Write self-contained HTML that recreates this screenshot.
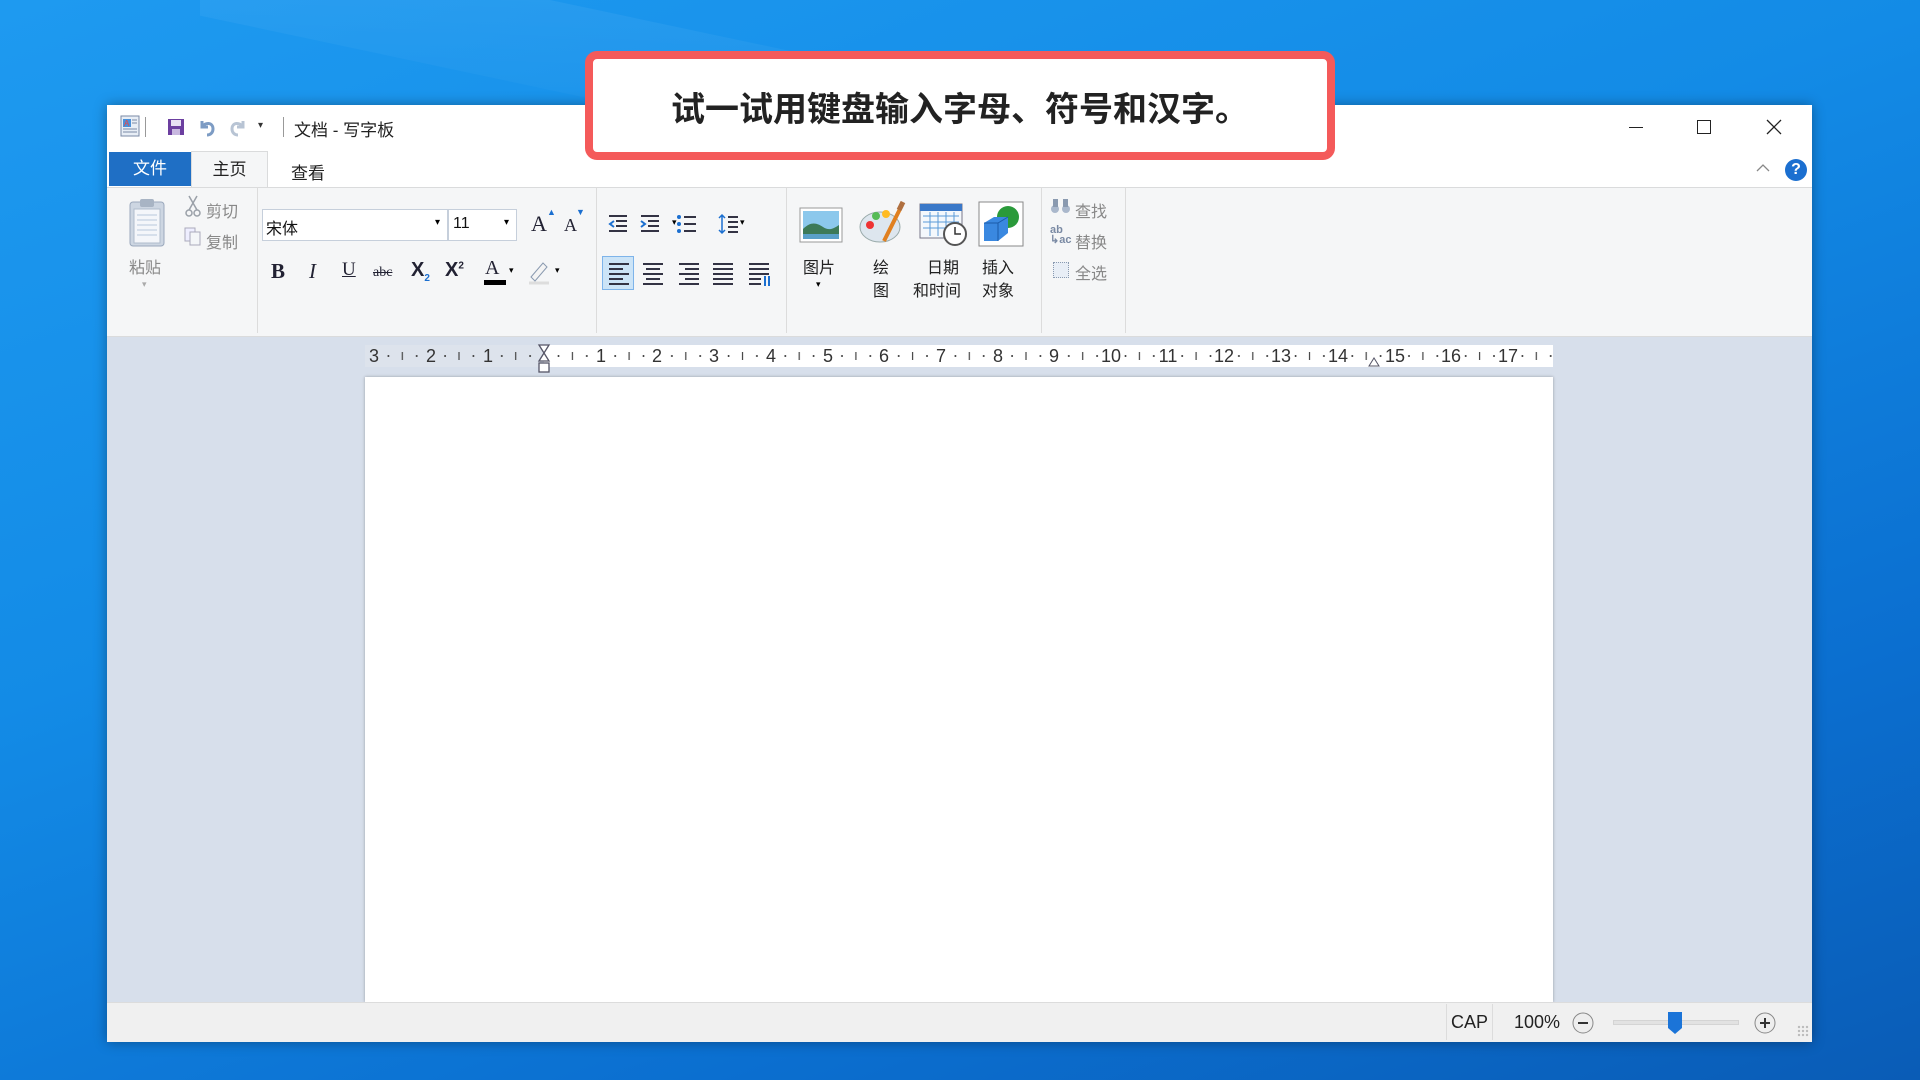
<!DOCTYPE html>
<html><head><meta charset="utf-8"><style>
*{margin:0;padding:0;box-sizing:border-box}
body{width:1920px;height:1080px;overflow:hidden;position:relative;font-family:"Liberation Sans","Noto Sans CJK SC",sans-serif;background:linear-gradient(160deg,#1e9af0 0%,#138be6 40%,#0b6fd0 75%,#0a5cb6 100%);}
.a{position:absolute}
.win{left:107px;top:105px;width:1705px;height:937px;background:#fff;box-shadow:0 0 12px rgba(0,0,0,.35)}
.t{font-size:17px;color:#222;white-space:nowrap}
.s{font-size:16px;color:#333;white-space:nowrap}
.g{color:#888}
.lbl{font-size:16px;color:#444;top:217px}
.sep{width:1px;background:#dcdcdc;top:88px;height:140px}
.num{position:absolute;top:1px;font-size:18px;color:#333;transform:translateX(-50%);padding:0 2px}
</style></head><body>
<div class="a" style="left:200px;top:0;width:700px;height:90px;background:linear-gradient(170deg,rgba(255,255,255,.08),rgba(255,255,255,0));transform:skewY(12deg)"></div>
<div class="a win">
 <svg class="a" style="left:13px;top:10px" width="20" height="22"><rect x="1" y="1" width="18" height="20" fill="#e8eef6" stroke="#7a8aa6"/><rect x="3" y="4" width="8" height="8" fill="#4a90d9"/><text x="4" y="11" font-size="8" fill="#e44" font-family="Liberation Sans">A</text><path d="M12 5h5M12 8h5M3 14h14M3 17h14" stroke="#7a8aa6"/></svg>
 <div class="a" style="left:38px;top:12px;width:1px;height:20px;background:#999"></div>
 <svg class="a" style="left:60px;top:13px" width="18" height="18"><rect x="1" y="1" width="16" height="16" fill="#6c3fa0"/><rect x="4" y="2" width="10" height="6" fill="#e8e0f4"/><rect x="5" y="11" width="8" height="6" fill="#c8b8e0"/></svg>
 <svg class="a" style="left:90px;top:12px" width="20" height="20"><path d="M5 4v6h6M5 10c3-5 11-5 11 2c0 4-3 6-6 6" stroke="#7d9cc4" stroke-width="3" fill="none"/></svg>
 <svg class="a" style="left:121px;top:12px" width="20" height="20"><path d="M15 4v6H9M15 10c-3-5-11-5-11 2c0 4 3 6 6 6" stroke="#b8c4d4" stroke-width="3" fill="none"/></svg>
 <div class="a" style="left:151px;top:15px;font-size:10px;color:#333">▾</div>
 <div class="a" style="left:176px;top:12px;width:1px;height:20px;background:#999"></div>
 <div class="a t" style="left:187px;top:11px">文档 - 写字板</div>
 <div class="a" style="left:1522px;top:22px;width:14px;height:1px;background:#222"></div>
 <div class="a" style="left:1590px;top:15px;width:14px;height:14px;border:1px solid #222"></div>
 <svg class="a" style="left:1659px;top:14px" width="16" height="16"><path d="M1 1L15 15M15 1L1 15" stroke="#222" stroke-width="1.3"/></svg>
 <div class="a" style="left:2px;top:47px;width:82px;height:34px;background:#1f6fc5;color:#fff;font-size:17px;text-align:center;line-height:34px">文件</div>
 <div class="a" style="left:84px;top:46px;width:77px;height:37px;border:1px solid #dadbdc;border-bottom:none;background:#f5f6f7;font-size:17px;text-align:center;line-height:36px;color:#222">主页</div>
 <div class="a t" style="left:184px;top:54px">查看</div>
 <svg class="a" style="left:1649px;top:58px" width="14" height="10"><path d="M1 8l6-6l6 6" stroke="#888" fill="none" stroke-width="1.3"/></svg>
 <div class="a" style="left:1678px;top:54px;width:22px;height:22px;border-radius:50%;background:#1b6fd0;color:#fff;font-size:16px;font-weight:bold;text-align:center;line-height:22px">?</div>
 <div class="a" style="left:0;top:82px;width:1705px;height:150px;background:#f5f6f7;border-top:1px solid #dadbdc;border-bottom:1px solid #dadbdc"></div>
 <div class="a" style="left:0;top:82px;width:1705px;height:150px">
  <svg class="a" style="left:20px;top:10px" width="40" height="50"><rect x="3" y="5" width="34" height="44" rx="3" fill="#cdd6e2" stroke="#9aa8bc"/><rect x="7" y="12" width="26" height="34" fill="#f4f6fa" stroke="#b0bccc"/><rect x="13" y="2" width="14" height="8" rx="2" fill="#a8b4c4"/><path d="M10 18h20M10 23h20M10 28h20M10 33h20M10 38h20" stroke="#b8c8dc"/></svg>
  <div class="a s g" style="left:22px;top:67px">粘贴</div>
  <div class="a" style="left:35px;top:92px;font-size:9px;color:#aaa">▾</div>
  <svg class="a" style="left:78px;top:8px" width="16" height="22"><path d="M4 1l8 14M12 1L4 15" stroke="#9aa0a8" stroke-width="1.5"/><circle cx="4" cy="18" r="3" fill="none" stroke="#9aa0a8" stroke-width="1.5"/><circle cx="12" cy="18" r="3" fill="none" stroke="#9aa0a8" stroke-width="1.5"/></svg>
  <div class="a s g" style="left:99px;top:11px">剪切</div>
  <svg class="a" style="left:77px;top:40px" width="18" height="20"><rect x="1" y="1" width="10" height="13" fill="#eef" stroke="#aab"/><rect x="6" y="5" width="10" height="13" fill="#f4f6f8" stroke="#aab"/></svg>
  <div class="a s g" style="left:99px;top:42px">复制</div>
  <div class="a lbl" style="left:47px;transform:translateX(-50%)">剪贴板</div>
  <div class="a sep" style="left:150px;top:0;height:146px"></div>
  <div class="a" style="left:155px;top:22px;width:186px;height:32px;background:#fff;border:1px solid #c6cfdb"></div>
  <div class="a s" style="left:159px;top:28px;color:#111">宋体</div>
  <div class="a" style="left:328px;top:30px;font-size:10px">▾</div>
  <div class="a" style="left:341px;top:22px;width:69px;height:32px;background:#fff;border:1px solid #c6cfdb"></div>
  <div class="a s" style="left:346px;top:28px;color:#111">11</div>
  <div class="a" style="left:397px;top:30px;font-size:10px">▾</div>
  <div class="a" style="left:424px;top:24px;font-family:'Liberation Serif',serif;font-size:22px;color:#223">A</div><div class="a" style="left:440px;top:20px;font-size:9px;color:#1b6fd0">▲</div>
  <div class="a" style="left:457px;top:28px;font-family:'Liberation Serif',serif;font-size:18px;color:#223">A</div><div class="a" style="left:469px;top:20px;font-size:9px;color:#1b6fd0">▼</div>
  <div class="a" style="left:164px;top:72px;font-family:'Liberation Serif',serif;font-weight:bold;font-size:21px;color:#223">B</div>
  <div class="a" style="left:202px;top:72px;font-family:'Liberation Serif',serif;font-style:italic;font-size:21px;color:#223">I</div>
  <div class="a" style="left:235px;top:72px;font-family:'Liberation Serif',serif;text-decoration:underline;font-size:19px;color:#223">U</div>
  <div class="a" style="left:266px;top:78px;font-family:'Liberation Serif',serif;font-size:14px;color:#223;text-decoration:line-through">abc</div>
  <div class="a" style="left:304px;top:72px;font-weight:bold;font-size:20px;color:#223">X<sub style="font-size:10px;color:#1b6fd0">2</sub></div>
  <div class="a" style="left:338px;top:72px;font-weight:bold;font-size:20px;color:#223">X<sup style="font-size:10px">2</sup></div>
  <div class="a" style="left:378px;top:70px;font-family:'Liberation Serif',serif;font-size:20px;color:#223">A</div><div class="a" style="left:377px;top:93px;width:22px;height:5px;background:#000"></div><div class="a" style="left:402px;top:78px;font-size:9px">▾</div>
  <svg class="a" style="left:420px;top:70px" width="24" height="28"><path d="M4 20l12-14l4 4l-12 14z" fill="#f4f4f4" stroke="#8a9ab0"/><path d="M2 26h20" stroke="#ddd" stroke-width="3"/></svg><div class="a" style="left:448px;top:78px;font-size:9px">▾</div>
  <div class="a lbl" style="left:317px;transform:translateX(-50%)">字体</div>
  <div class="a sep" style="left:489px;top:0;height:146px"></div>
  <svg class="a" style="left:500px;top:26px" width="140" height="28" fill="none" stroke-width="2">
   <path d="M2 3h18M9 8h11M9 13h11M2 18h18" stroke="#334"/><path d="M7 8l-4 3l4 3" stroke="#1b6fd0"/>
   <path d="M34 3h18M41 8h11M41 13h11M34 18h18" stroke="#334"/><path d="M34 8l4 3l-4 3" stroke="#1b6fd0"/>
   <circle cx="72" cy="4" r="2" fill="#1b6fd0" stroke="none"/><circle cx="72" cy="11" r="2" fill="#1b6fd0" stroke="none"/><circle cx="72" cy="18" r="2" fill="#1b6fd0" stroke="none"/><path d="M77 4h12M77 11h12M77 18h12" stroke="#334"/>
   <path d="M115 2v18M112 5l3-3l3 3M112 17l3 3l3-3" stroke="#1b6fd0" stroke-width="1.5"/><path d="M121 4h10M121 9h10M121 14h10M121 19h10" stroke="#334"/>
  </svg>
  <div class="a" style="left:565px;top:30px;font-size:9px">▾</div><div class="a" style="left:633px;top:30px;font-size:9px">▾</div>
  <div class="a" style="left:495px;top:69px;width:32px;height:34px;background:#cce4f7;border:1px solid #7eb4ea"></div>
  <svg class="a" style="left:500px;top:75px" width="170" height="24" stroke="#334" stroke-width="2">
   <path d="M2 2h20M2 7h14M2 12h20M2 17h14M2 22h20"/>
   <path d="M36 2h20M39 7h14M36 12h20M39 17h14M36 22h20"/>
   <path d="M72 2h20M78 7h14M72 12h20M78 17h14M72 22h20"/>
   <path d="M106 2h20M106 7h20M106 12h20M106 17h20M106 22h20"/>
   <path d="M142 2h20M142 7h20M142 12h20M142 17h12M142 22h12"/><path d="M158 14v10M162 14v10" stroke="#1b6fd0"/>
  </svg>
  <div class="a lbl" style="left:581px;transform:translateX(-50%)">段落</div>
  <div class="a sep" style="left:679px;top:0;height:146px"></div>
  <svg class="a" style="left:692px;top:20px" width="44" height="36"><rect x="1" y="1" width="42" height="34" fill="#fff" stroke="#999"/><rect x="4" y="4" width="36" height="28" fill="#8cc8ec"/><path d="M4 22c8-8 14-6 20-2c6 4 10 2 16-2v14H4z" fill="#3d7a58"/><rect x="4" y="27" width="36" height="5" fill="#5aa0c8"/></svg>
  <div class="a s" style="left:696px;top:67px;color:#222">图片</div>
  <div class="a" style="left:709px;top:92px;font-size:9px">▾</div>
  <svg class="a" style="left:751px;top:14px" width="48" height="44"><ellipse cx="22" cy="26" rx="20" ry="15" fill="#dde6ee" stroke="#9aa"/><circle cx="12" cy="24" r="4" fill="#e33"/><circle cx="18" cy="15" r="4" fill="#5b5"/><circle cx="28" cy="13" r="4" fill="#fb2"/><path d="M26 40L44 4" stroke="#e08020" stroke-width="4"/><path d="M41 9l4-8" stroke="#b07040" stroke-width="5"/></svg>
  <div class="a s" style="left:766px;top:67px;color:#222">绘</div><div class="a s" style="left:766px;top:90px;color:#222">图</div>
  <svg class="a" style="left:812px;top:15px" width="50" height="44"><rect x="1" y="2" width="42" height="34" fill="#f4f8fc" stroke="#778"/><rect x="1" y="2" width="42" height="7" fill="#3a78c8"/><path d="M4 14h36M4 20h36M4 26h36M11 10v24M19 10v24M27 10v24M35 10v24" stroke="#5a9ad8"/><circle cx="36" cy="32" r="11" fill="#fff" stroke="#555" stroke-width="2"/><path d="M36 25v7h6" stroke="#333" stroke-width="1.5" fill="none"/></svg>
  <div class="a s" style="left:820px;top:67px;color:#222">日期</div><div class="a s" style="left:806px;top:90px;color:#222">和时间</div>
  <svg class="a" style="left:871px;top:14px" width="46" height="46"><rect x="1" y="1" width="44" height="44" fill="#fff" stroke="#888"/><circle cx="30" cy="16" r="11" fill="#2a9a3a"/><path d="M6 22l10-6h14v16l-10 8H6z" fill="#3a88e0"/><path d="M6 22h14v18M20 22l10-6" stroke="#1a5aa8" fill="none"/></svg>
  <div class="a s" style="left:875px;top:67px;color:#222">插入</div><div class="a s" style="left:875px;top:90px;color:#222">对象</div>
  <div class="a lbl" style="left:804px;transform:translateX(-50%)">插入</div>
  <div class="a sep" style="left:934px;top:0;height:146px"></div>
  <svg class="a" style="left:943px;top:10px" width="22" height="18"><circle cx="5" cy="12" r="4" fill="#aab8cc"/><circle cx="16" cy="12" r="4" fill="#aab8cc"/><rect x="3" y="2" width="5" height="8" fill="#8a9ab0"/><rect x="13" y="2" width="5" height="8" fill="#8a9ab0"/></svg>
  <div class="a s g" style="left:968px;top:11px">查找</div>
  <div class="a" style="left:943px;top:38px;font-size:11px;font-weight:bold;color:#7a8aa4;line-height:10px">ab<br>↳ac</div>
  <div class="a s g" style="left:968px;top:42px">替换</div>
  <div class="a" style="left:946px;top:75px;width:16px;height:16px;border:1px dotted #8a9ab0;background:#e8eef6"></div>
  <div class="a s g" style="left:968px;top:73px">全选</div>
  <div class="a lbl" style="left:974px;transform:translateX(-50%)">编辑</div>
  <div class="a sep" style="left:1018px;top:0;height:146px"></div>
 </div>
 <div class="a" style="left:0;top:232px;width:1705px;height:665px;background:#d7dfeb"></div>
 <svg class="a" style="left:258px;top:240px" width="1188" height="22">
  <defs><pattern id="rp" width="56.7" height="22" patternUnits="userSpaceOnUse" patternTransform="translate(179 0)">
   <rect x="13.7" y="10" width="1.6" height="2" fill="#444"/><rect x="42" y="10" width="1.6" height="2" fill="#444"/><rect x="27.8" y="7" width="1.2" height="8" fill="#444"/>
  </pattern></defs>
  <rect width="1188" height="22" fill="#fff"/><rect width="179" height="22" fill="#dde3ec"/>
  <rect width="1188" height="22" fill="url(#rp)"/>
 </svg>
 <div class="a" style="left:0;top:240px;width:1705px;height:22px">
  <span class="num" style="left:267px;background:#dde3ec">3</span><span class="num" style="left:324px;background:#dde3ec">2</span><span class="num" style="left:381px;background:#dde3ec">1</span>
  <span class="num" style="left:494px;background:#fff">1</span><span class="num" style="left:550px;background:#fff">2</span><span class="num" style="left:607px;background:#fff">3</span><span class="num" style="left:664px;background:#fff">4</span><span class="num" style="left:721px;background:#fff">5</span><span class="num" style="left:777px;background:#fff">6</span><span class="num" style="left:834px;background:#fff">7</span><span class="num" style="left:891px;background:#fff">8</span><span class="num" style="left:947px;background:#fff">9</span><span class="num" style="left:1004px;background:#fff">10</span><span class="num" style="left:1061px;background:#fff">11</span><span class="num" style="left:1117px;background:#fff">12</span><span class="num" style="left:1174px;background:#fff">13</span><span class="num" style="left:1231px;background:#fff">14</span><span class="num" style="left:1288px;background:#fff">15</span><span class="num" style="left:1344px;background:#fff">16</span><span class="num" style="left:1401px;background:#fff">17</span>
 </div>
 <svg class="a" style="left:430px;top:238px" width="16" height="34"><path d="M2 2h10L7 10z M7 10L2 18h10z" fill="#fff" stroke="#556" stroke-width="1.3"/><rect x="2" y="20" width="10" height="9" fill="#fff" stroke="#556" stroke-width="1.3"/></svg>
 <svg class="a" style="left:1261px;top:250px" width="12" height="12"><path d="M1 11L6 3l5 8z" fill="#fff" stroke="#556"/></svg>
 <div class="a" style="left:258px;top:272px;width:1188px;height:625px;background:#fff;box-shadow:0 0 3px rgba(0,0,0,.3)"></div>
 <div class="a" style="left:0;top:897px;width:1705px;height:40px;background:#f0f0f0;border-top:1px solid #dcdcdc"></div>
 <div class="a" style="left:1339px;top:899px;width:1px;height:36px;background:#dcdcdc"></div>
 <div class="a" style="left:1385px;top:899px;width:1px;height:36px;background:#dcdcdc"></div>
 <div class="a t" style="left:1344px;top:907px;font-size:18px">CAP</div>
 <div class="a t" style="left:1407px;top:907px;font-size:18px">100%</div>
 <svg class="a" style="left:1464px;top:906px" width="24" height="24"><circle cx="12" cy="12" r="10" fill="#eee" stroke="#888"/><path d="M7 12h10" stroke="#333" stroke-width="2"/></svg>
 <div class="a" style="left:1506px;top:915px;width:126px;height:5px;background:#e2e2e2;border:1px solid #d4d4d4"></div>
 <svg class="a" style="left:1560px;top:906px" width="16" height="24"><path d="M1 1h14v16l-7 6l-7-6z" fill="#1b74d8"/></svg>
 <svg class="a" style="left:1646px;top:906px" width="24" height="24"><circle cx="12" cy="12" r="10" fill="#eee" stroke="#888"/><path d="M7 12h10M12 7v10" stroke="#333" stroke-width="2"/></svg>
 <div class="a" style="left:1690px;top:920px;width:12px;height:12px;background-image:radial-gradient(circle,#bbb 1px,transparent 1.4px);background-size:4px 4px"></div>
</div>
<div class="a" style="left:585px;top:51px;width:750px;height:109px;background:#fff;border:8px solid #f45a5a;border-radius:12px"></div>
<div class="a" style="left:585px;top:82px;width:750px;text-align:center;font-size:34px;font-weight:bold;color:#222;font-family:'Liberation Sans','Noto Sans CJK SC',sans-serif">试一试用键盘输入字母、符号和汉字。</div>
</body></html>
